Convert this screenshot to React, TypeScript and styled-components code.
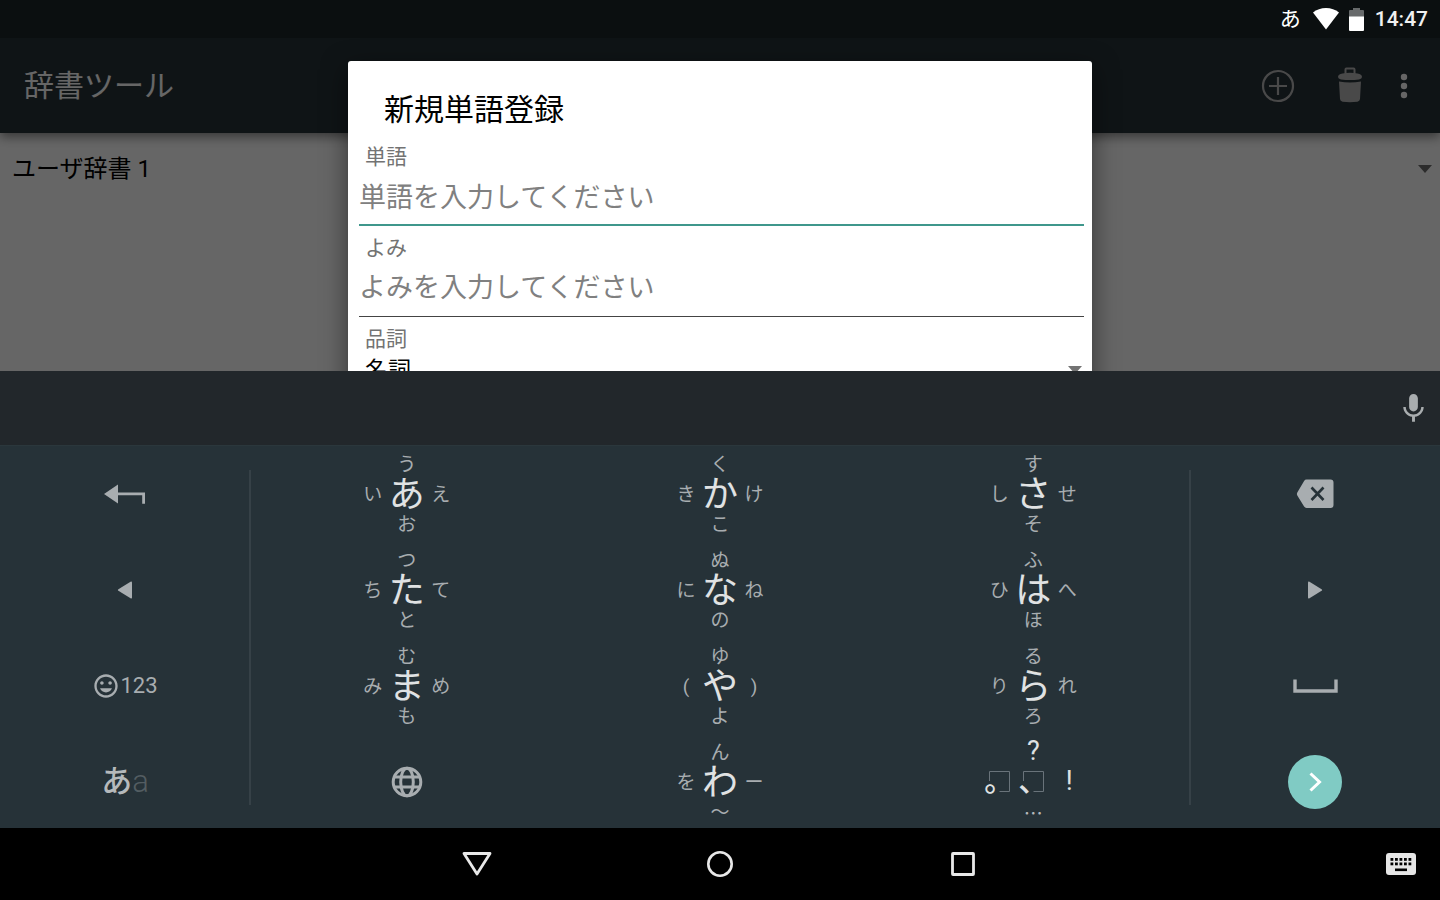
import React from "react";
import styled, { createGlobalStyle, css } from "styled-components";
import { MdMic, MdInsertEmoticon } from "react-icons/md";

const CJK = `"Noto Sans CJK JP", sans-serif`;
const BASE = `Roboto, ${CJK}`;

const GlobalStyle = createGlobalStyle`
  *, *::before, *::after { box-sizing: border-box; }
  body { margin: 0; background: #000; font-family: ${BASE}; }
  button, input, select { font-family: inherit; margin: 0; }
  svg { display: block; }
`;

const Device = styled.div`
  display: flex;
  flex-direction: column;
  min-height: 100vh;
  background: #000;
`;

const PlainButton = styled.button`
  display: flex;
  align-items: center;
  justify-content: center;
  padding: 0;
  border: 0;
  background: none;
  color: inherit;
`;

/* ---------- Application screen ---------- */

const Screen = styled.div`
  position: relative;
  display: flex;
  flex-direction: column;
  flex: 1;
  min-height: 371px;
  overflow: hidden;
  background: #fff;
`;

const StatusBar = styled.div`
  position: relative;
  z-index: 2;
  display: flex;
  align-items: center;
  justify-content: flex-end;
  height: 38px;
  padding-right: 12px;
  background: #0b0f10;
  color: #fff;
`;

const ImeMark = styled.span`
  margin-right: 12px;
  font-size: 21px;
  line-height: 40px;
`;

const Clock = styled.time`
  margin-left: 11px;
  font-size: 21px;
  font-weight: 500;
  line-height: 40px;
  color: #f0f0f0;
`;

const BatteryWrap = styled.span`
  margin-left: 10px;
`;

const Toolbar = styled.header`
  display: flex;
  align-items: center;
  height: 95px;
  padding: 0 24px;
  background: #263238;
  color: #fff;
  box-shadow: 0 4px 10px rgba(0, 0, 0, 0.45);
`;

const AppTitle = styled.h1`
  flex: 1;
  margin: 0;
  font-size: 30px;
  font-weight: 400;
  line-height: 40px;
`;

const ToolbarActions = styled.div`
  display: flex;
  align-items: center;
`;

const ToolbarButton = styled(PlainButton)<{ $narrow?: boolean }>`
  width: ${(p) => (p.$narrow ? 36 : 72)}px;
  height: 72px;
  color: ${(p) => (p.$narrow ? "#fff" : "#b6b6b6")};
`;

const ToolbarEnd = styled.div`
  margin-right: -6px;
`;

const SelectWrap = styled.div<{ $inset?: number }>`
  position: relative;
  > svg {
    position: absolute;
    right: ${(p) => p.$inset ?? 8}px;
    top: 50%;
    margin-top: -4px;
    pointer-events: none;
  }
`;

const PlainSelect = styled.select<{ $tall?: boolean }>`
  display: block;
  width: 100%;
  height: ${(p) => (p.$tall ? 72 : 30)}px;
  padding: 0 30px 0 ${(p) => (p.$tall ? 12 : 6)}px;
  border: 0;
  outline: 0;
  appearance: none;
  background: none;
  color: #000;
  font-size: ${(p) => (p.$tall ? 24 : 23)}px;
  opacity: 1;
`;

const Scrim = styled.div`
  position: absolute;
  inset: 0;
  z-index: 1;
  background: rgba(0, 0, 0, 0.6);
`;

const DialogLayer = styled.div`
  position: absolute;
  inset: 61px 0 0;
  z-index: 3;
  display: flex;
  align-items: flex-start;
  justify-content: center;
`;

const Dialog = styled.form`
  width: 744px;
  max-width: 100%;
  padding: 0 8px 40px 11px;
  border-radius: 3px;
  background: #fff;
  box-shadow: 0 8px 26px rgba(0, 0, 0, 0.5);
`;

const DialogTitle = styled.h2`
  margin: 0;
  padding: 18px 0 0 25px;
  font-size: 30px;
  font-weight: 400;
  line-height: 62px;
  color: #000;
`;

const Field = styled.div`
  margin-bottom: 6px;
`;

const FieldLabel = styled.label`
  display: block;
  padding-left: 6px;
  font-size: 21px;
  line-height: 32px;
  color: #737373;
`;

const TextInput = styled.input<{ $active?: boolean }>`
  display: block;
  width: 100%;
  height: 53px;
  padding: 0 0 ${(p) => (p.$active ? 2 : 4)}px;
  border: 0;
  border-bottom: ${(p) => (p.$active ? "2px solid #3f978c" : "1px solid #444")};
  border-radius: 0;
  outline: 0;
  background: none;
  font-size: 27px;
  &::placeholder {
    color: #808080;
    opacity: 1;
  }
`;

/* ---------- Keyboard ---------- */

const Keyboard = styled.section`
  background: #263238;
  color: #a8adb0;
`;

const Suggestions = styled.div`
  display: flex;
  align-items: center;
  justify-content: flex-end;
  height: 74px;
  padding-right: 9px;
  background: #22272b;
  color: #a9adaf;
`;

const KeyArea = styled.div`
  display: grid;
  grid-template-columns: 25fr 94fr 25fr;
  padding-top: 2px;
  border-top: 1px solid #2b373c;
`;

const KeyColumn = styled.div`
  display: grid;
  grid-auto-rows: 92px;
  row-gap: 4px;
`;

const KanaPad = styled.div`
  position: relative;
  display: grid;
  grid-template-columns: repeat(3, 1fr);
  grid-auto-rows: 92px;
  row-gap: 4px;
  &::before,
  &::after {
    content: "";
    position: absolute;
    top: 22px;
    bottom: 23px;
    width: 2px;
    background: #364147;
  }
  &::before { left: -1px; }
  &::after { right: -1px; }
`;

const Key = styled(PlainButton)`
  width: 100%;
`;

const Flick = styled.span<{ $marks?: boolean }>`
  display: grid;
  grid-template-columns: 32px 36px 32px;
  grid-template-rows: 24px 36px 24px;
  grid-template-areas: ". up ." "left main right" ". down .";
  place-items: center;
  padding-top: 2px;
  font-size: 19px;
  line-height: 24px;
  ${(p) =>
    p.$marks &&
    css`
      grid-template-columns: 32px 36px 36px;
      padding: 0 0 2px 4px;
      color: #dfe1e2;
    `}
`;

const Kana = styled.span<{ $at: string; $large?: boolean; $symbol?: boolean; $dim?: boolean }>`
  grid-area: ${(p) => p.$at};
  ${(p) => p.$symbol && "font-size: 27px;"}
  ${(p) => p.$dim && `font-family: ${CJK}; padding-top: 4px; color: #b4b8ba;`}
  ${(p) =>
    p.$large &&
    css`
      font-size: 36px;
      line-height: 36px;
      color: #e0e2e3;
    `}
`;

const Mark = styled.span<{ $at: string }>`
  grid-area: ${(p) => p.$at};
  position: relative;
  font-size: 30px;
  font-weight: 500;
  line-height: 24px;
  > svg {
    position: absolute;
    left: 5px;
    top: 2px;
  }
`;

const ModeText = styled.span`
  font-size: 22px;
  line-height: 28px;
`;

const ModeKana = styled.span`
  font-size: 31px;
  line-height: 40px;
  font-weight: 500;
  color: #b5b9bb;
`;

const ModeLatin = styled.span`
  font-size: 31px;
  font-weight: 300;
  line-height: 40px;
  color: #535d62;
`;

const GoCircle = styled.span`
  display: grid;
  place-items: center;
  width: 54px;
  height: 54px;
  border-radius: 50%;
  background: #80cbc4;
`;

/* ---------- Navigation bar ---------- */

const NavBar = styled.nav`
  display: grid;
  grid-template-columns: 1fr auto 1fr;
  height: 72px;
  background: #000;
`;

const NavKeys = styled.div`
  grid-column: 2;
  display: flex;
`;

const NavButton = styled(PlainButton)`
  width: 243px;
  height: 72px;
`;

const ImeSwitch = styled(PlainButton)`
  justify-self: end;
  width: 78px;
  height: 72px;
`;

/* ---------- Drawings ---------- */

const Caret = ({ color }: { color: string }) => (
  <svg width="14" height="8" viewBox="0 0 14 8">
    <path d="M0 0h14L7 8z" fill={color} />
  </svg>
);

const WifiIcon = () => (
  <svg width="26" height="22" viewBox="0 0 26 22">
    <path d="M0 4.6C3.6 1.6 8 0 13 0s9.400 1.600 13 4.600L13 21.500z" fill="#fff" />
  </svg>
);

const BatteryIcon = () => (
  <svg width="15" height="23" viewBox="0 0 15 23">
    <path d="M4 0h7v2h3q1 0 1 1v6H0V3q0-1 1-1h3z" fill="#676a6b" />
    <path d="M0 8.500h15V22q0 1-1 1H1q-1 0-1-1z" fill="#fff" />
  </svg>
);

const AddIcon = () => (
  <svg width="34" height="34" viewBox="0 0 34 34" fill="none" stroke="currentColor">
    <circle cx="17" cy="17" r="15" strokeWidth="2.200" />
    <path d="M17 8v18M8 17h18" strokeWidth="2.200" />
  </svg>
);

const TrashIcon = () => (
  <svg width="26" height="38" viewBox="0 0 26 38">
    <path d="M8.500 7V2.500q0-.9.9-.9h7.200q.9 0 .9.900V7" fill="none" stroke="currentColor" strokeWidth="2" />
    <path d="M1 10Q1 7 5.500 6.400q7.500-1.200 15 0Q25 7 25 10q0 1.700-3 2.400-9 1.400-18 0Q1 11.700 1 10z" fill="currentColor" />
    <path d="M2 14.500q11 2.200 22 0L23 32q-.2 2.200-2.600 2.700-7.400.9-14.800 0Q3.200 34.200 3 32z" fill="currentColor" />
  </svg>
);

const MoreIcon = () => (
  <svg width="8" height="26" viewBox="0 0 8 26" fill="currentColor">
    <circle cx="4" cy="4" r="3.200" />
    <circle cx="4" cy="13" r="3.200" />
    <circle cx="4" cy="22" r="3.200" />
  </svg>
);

const ReturnIcon = () => (
  <svg width="42" height="20" viewBox="0 0 42 20">
    <path d="M0 10 14 .5v19z" fill="currentColor" />
    <path d="M14 9.800h25.600v10" fill="none" stroke="currentColor" strokeWidth="2.800" />
  </svg>
);

const ArrowIcon = ({ right }: { right?: boolean }) => (
  <svg width="16" height="18" viewBox="0 0 16 18">
    <path
      d={right ? "M1 1.500Q1-.2 2.500.7L14.600 8.200q1 .8 0 1.600L2.500 17.300Q1 18.200 1 16.500z" : "M15 1.500Q15-.2 13.500.7L1.400 8.200q-1 .8 0 1.600l12.100 7.500q1.500.9 1.500-.8z"}
      fill="currentColor"
    />
  </svg>
);

const BackspaceIcon = () => (
  <svg width="38" height="30" viewBox="0 0 38 30">
    <path d="M10.500 .5h24q3 0 3 3V26q0 3-3 3h-24Q9 29 8.100 27.600L1.300 16.500q-.9-1.500 0-3L8.100 1.900Q9 .5 10.500 .5z" fill="currentColor" />
    <path d="m15.500 8.500 12 12.500M27.500 8.500 15.500 21" stroke="#263238" strokeWidth="2.600" />
  </svg>
);

const SpaceIcon = () => (
  <svg width="45" height="14" viewBox="0 0 45 14">
    <path d="M2 .5v11.500h41V.5" fill="none" stroke="currentColor" strokeWidth="3.400" />
  </svg>
);

const GlobeIcon = () => (
  <svg width="32" height="32" viewBox="0 0 32 32" fill="none" stroke="currentColor" strokeWidth="3">
    <circle cx="16" cy="16" r="13.800" />
    <ellipse cx="16" cy="16" rx="6.300" ry="13.800" />
    <path d="M3 11h26M3 21h26" />
  </svg>
);

const MarkBox = () => (
  <svg width="21" height="21" viewBox="0 0 21 21" fill="none" stroke="#69737a">
    <path d="M.5 10V.5h20v20H10.500" />
  </svg>
);

const ChevronIcon = () => (
  <svg width="14" height="20" viewBox="0 0 14 20">
    <path d="m2.500 1.500 9 8.500-9 8.500" fill="none" stroke="#fff" strokeWidth="3" />
  </svg>
);

const BackIcon = () => (
  <svg width="30" height="26" viewBox="0 0 30 26">
    <path d="M2 2.500h26L15 23z" fill="none" stroke="#e8e8e8" strokeWidth="2.800" strokeLinejoin="round" />
  </svg>
);

const HomeIcon = () => (
  <svg width="28" height="28" viewBox="0 0 28 28">
    <circle cx="14" cy="14" r="11.700" fill="none" stroke="#e8e8e8" strokeWidth="2.600" />
  </svg>
);

const RecentsIcon = () => (
  <svg width="26" height="26" viewBox="0 0 26 26">
    <rect x="2.500" y="2.500" width="21" height="21" rx="0.500" fill="none" stroke="#e8e8e8" strokeWidth="2.800" />
  </svg>
);

const KeyboardIcon = () => (
  <svg width="30" height="22" viewBox="0 0 30 22">
    <rect width="30" height="22" rx="3" fill="#e6e6e6" />
    {[5, 9.5].map((y) =>
      [4.5, 9, 13.5, 18, 22.5].map((x) => (
        <rect key={`${x}-${y}`} x={x} y={y} width="2.800" height="2.800" fill="#000" />
      ))
    )}
    <rect x="9" y="15.500" width="12" height="2.600" fill="#000" />
  </svg>
);

/* ---------- Page ---------- */

type FlickKey = [main: string, left: string, up: string, right: string, down: string];

const kanaKeys: FlickKey[] = [
  ["あ", "い", "う", "え", "お"],
  ["か", "き", "く", "け", "こ"],
  ["さ", "し", "す", "せ", "そ"],
  ["た", "ち", "つ", "て", "と"],
  ["な", "に", "ぬ", "ね", "の"],
  ["は", "ひ", "ふ", "へ", "ほ"],
  ["ま", "み", "む", "め", "も"],
  ["や", "(", "ゆ", ")", "よ"],
  ["ら", "り", "る", "れ", "ろ"],
];

const waKey: FlickKey = ["わ", "を", "ん", "ー", "〜"];

const FlickButton = ({ keys: [main, left, up, right, down] }: { keys: FlickKey }) => (
  <Key type="button">
    <Flick>
      <Kana $at="up">{up}</Kana>
      <Kana $at="left">{left}</Kana>
      <Kana $at="main" $large>{main}</Kana>
      <Kana $at="right">{right}</Kana>
      <Kana $at="down">{down}</Kana>
    </Flick>
  </Key>
);

export default function App() {
  return (
    <>
      <GlobalStyle />
      <Device lang="ja">
        <Screen>
          <StatusBar>
            <ImeMark>あ</ImeMark>
            <WifiIcon />
            <BatteryWrap><BatteryIcon /></BatteryWrap>
            <Clock>14:47</Clock>
          </StatusBar>
          <Toolbar>
            <AppTitle>辞書ツール</AppTitle>
            <ToolbarActions>
              <ToolbarButton type="button" aria-label="追加"><AddIcon /></ToolbarButton>
              <ToolbarButton type="button" aria-label="削除"><TrashIcon /></ToolbarButton>
              <ToolbarEnd>
                <ToolbarButton $narrow type="button" aria-label="その他"><MoreIcon /></ToolbarButton>
              </ToolbarEnd>
            </ToolbarActions>
          </Toolbar>
          <SelectWrap>
            <PlainSelect $tall aria-label="辞書">
              <option>ユーザ辞書 1</option>
            </PlainSelect>
            <Caret color="#6e6e6e" />
          </SelectWrap>
          <Scrim />
          <DialogLayer>
            <Dialog role="dialog" aria-labelledby="dialog-title">
              <DialogTitle id="dialog-title">新規単語登録</DialogTitle>
              <Field>
                <FieldLabel htmlFor="word">単語</FieldLabel>
                <TextInput id="word" $active placeholder="単語を入力してください" />
              </Field>
              <Field>
                <FieldLabel htmlFor="reading">よみ</FieldLabel>
                <TextInput id="reading" placeholder="よみを入力してください" />
              </Field>
              <FieldLabel htmlFor="part">品詞</FieldLabel>
              <SelectWrap $inset={2}>
                <PlainSelect id="part">
                  <option>名詞</option>
                </PlainSelect>
                <Caret color="#737373" />
              </SelectWrap>
            </Dialog>
          </DialogLayer>
        </Screen>

        <Keyboard>
          <Suggestions>
            <PlainButton type="button" aria-label="音声入力"><MdMic size={35} /></PlainButton>
          </Suggestions>
          <KeyArea>
            <KeyColumn>
              <Key type="button" aria-label="改行"><ReturnIcon /></Key>
              <Key type="button" aria-label="左"><ArrowIcon /></Key>
              <Key type="button">
                <MdInsertEmoticon size={28} />
                <ModeText>123</ModeText>
              </Key>
              <Key type="button">
                <ModeKana>あ</ModeKana>
                <ModeLatin>a</ModeLatin>
              </Key>
            </KeyColumn>
            <KanaPad>
              {kanaKeys.map((k) => <FlickButton key={k[0]} keys={k} />)}
              <Key type="button" aria-label="言語切替"><GlobeIcon /></Key>
              <FlickButton keys={waKey} />
              <Key type="button">
                <Flick $marks>
                  <Kana $at="up" $symbol>?</Kana>
                  <Mark $at="left">。<MarkBox /></Mark>
                  <Mark $at="main">、<MarkBox /></Mark>
                  <Kana $at="right" $symbol>!</Kana>
                  <Kana $at="down" $dim>…</Kana>
                </Flick>
              </Key>
            </KanaPad>
            <KeyColumn>
              <Key type="button" aria-label="削除"><BackspaceIcon /></Key>
              <Key type="button" aria-label="右"><ArrowIcon right /></Key>
              <Key type="button" aria-label="空白"><SpaceIcon /></Key>
              <Key type="button" aria-label="次へ">
                <GoCircle><ChevronIcon /></GoCircle>
              </Key>
            </KeyColumn>
          </KeyArea>
        </Keyboard>

        <NavBar>
          <NavKeys>
            <NavButton type="button" aria-label="戻る"><BackIcon /></NavButton>
            <NavButton type="button" aria-label="ホーム"><HomeIcon /></NavButton>
            <NavButton type="button" aria-label="最近使ったアプリ"><RecentsIcon /></NavButton>
          </NavKeys>
          <ImeSwitch type="button" aria-label="キーボード切替"><KeyboardIcon /></ImeSwitch>
        </NavBar>
      </Device>
    </>
  );
}
